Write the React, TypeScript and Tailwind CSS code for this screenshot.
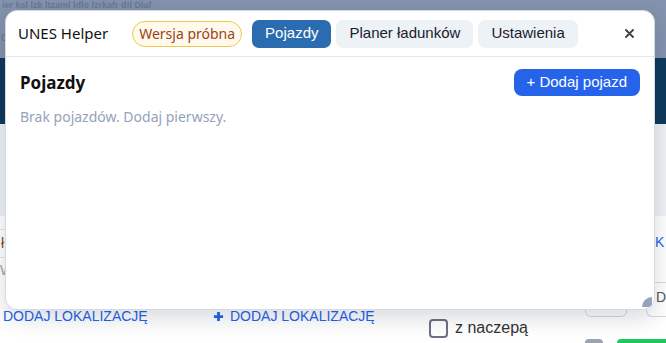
import React from 'react';

const tabs = [
  { label: 'Pojazdy', active: true },
  { label: 'Planer ładunków', active: false },
  { label: 'Ustawienia', active: false },
];

const PlusIcon = () => (
  <svg width="11" height="11" viewBox="0 0 12 12" className="shrink-0">
    <path d="M6 1v10M1 6h10" stroke="#2563eb" strokeWidth="3" />
  </svg>
);

const BackgroundPage: React.FC = () => (
  <div className="flex flex-col h-full font-['Liberation_Sans',sans-serif]">
    {/* dimmed top bar */}
    <div className="h-[58px] bg-[#8393ad] overflow-hidden">
      <div className="pl-[2px] pt-[1px] text-[9px] font-bold leading-[9px] text-[#5d6d8a] whitespace-nowrap opacity-70">
        ier ksl lzk ltzaml ldlo lzrkafr d!l Dlaf
      </div>
      <div className="pl-[1px] mt-[20px] text-[12px] leading-[14px] text-[#5d6d8a] opacity-70">c:</div>
    </div>
    <div className="h-[67px] bg-[#0e3a5c]" />
    <div className="h-[92px] bg-[#eef1f4]" />
    <div className="flex flex-col flex-1 bg-white">
      <div className="h-[66px] flex">
        <div className="w-[20px] flex flex-col">
          <div className="h-[13px]" />
          <div className="border-t border-[#e2e6ea] h-[28px] flex items-center text-[14px] text-[#7a4a2a] pl-[1px]">ł</div>
          <div className="border-t border-[#e2e6ea] h-[25px] flex items-center text-[14px] text-[#a0a6ad]">W</div>
        </div>
        <div className="flex-1" />
        <div className="w-[11px] pt-[18px] text-[14px] leading-[16px] text-[#2563eb]">K</div>
      </div>
      <div className="flex-1 flex items-start">
        <div className="w-[213px] pl-[3px] pt-[26px] text-[14px] leading-[16px] text-[#2563eb] whitespace-nowrap">
          DODAJ LOKALIZACJĘ
        </div>
        <div className="w-[216px] pt-[26px] flex items-center gap-[6px] text-[14px] leading-[16px] text-[#2563eb] whitespace-nowrap">
          <PlusIcon />
          DODAJ LOKALIZACJĘ
        </div>
        <div className="w-[156px] pt-[36px] flex items-center gap-[7px]">
          <div className="w-[19px] h-[19px] rounded-[4px] border-2 border-[#6b7280] bg-white" />
          <span className="text-[16px] leading-[20px] text-[#333]">z naczepą</span>
        </div>
        <div className="w-[81px] flex flex-col">
          <div className="flex h-[35px]">
            <div className="w-[46px] rounded-b-[6px] border border-[#d3d9e1]" />
            <div className="ml-[19px] flex-1 rounded-l-[6px] border-y border-l border-[#d3d9e1] pl-[9px] pt-[6px] text-[14px] leading-[16px] text-[#555]">
              D
            </div>
          </div>
          <div className="mt-[22px] flex">
            <div className="w-[18px] h-[4px] rounded-t-[4px] bg-[#9ca3af]" />
            <div className="ml-[14px] flex-1 h-[4px] rounded-tl-[6px] bg-[#22c55e]" />
          </div>
        </div>
      </div>
    </div>
  </div>
);

export default function App() {
  return (
    <div className="relative w-[666px] h-[343px] overflow-hidden bg-white font-['Noto_Sans',sans-serif]">
      <BackgroundPage />

      {/* modal */}
      <div className="absolute left-[5px] top-[10px] w-[650px] h-[300px] rounded-[12px] border border-[#d5dbe3] bg-white shadow-[0_8px_22px_rgba(15,23,42,0.16)] flex flex-col overflow-hidden">
        <div className="flex items-center h-[46px] shrink-0 border-b border-[#e2e8f0] pl-[12px] pr-[20px]">
          <span className="text-[15px] text-[#111]">UNES Helper</span>
          <span className="ml-[24px] h-[26px] px-[6px] flex items-center rounded-full border border-[#ecc94b] bg-[#fffaeb] text-[14px] text-[#9c4221]">
            Wersja próbna
          </span>
          <div className="ml-[10px] flex gap-[5px]">
            {tabs.map((t) => (
              <button
                key={t.label}
                className={`h-[28px] px-[13px] rounded-[7px] text-[15px] font-['Liberation_Sans',sans-serif] ${
                  t.active ? 'bg-[#2b6cb0] text-white' : 'bg-[#edf2f7] text-[#1a202c]'
                }`}
              >
                {t.label}
              </button>
            ))}
          </div>
          <button className="ml-auto w-[10px] h-[10px] flex items-center justify-center">
            <svg width="9" height="9" viewBox="0 0 9 9">
              <path d="M1 1l7 7M8 1L1 8" stroke="#3f3f46" strokeWidth="1.8" strokeLinecap="round" />
            </svg>
          </button>
        </div>

        <div className="flex-1 pl-[14px] pr-[14px] pt-[12px]">
          <div className="flex items-center justify-between">
            <h2 className="text-[17px] font-bold text-[#111]">Pojazdy</h2>
            <button className="h-[27px] px-[13px] rounded-[8px] bg-[#2563eb] text-white text-[15px] font-['Liberation_Sans',sans-serif]">
              + Dodaj pojazd
            </button>
          </div>
          <p className="mt-[11px] text-[14px] leading-[20px] text-[#94a3b8]">Brak pojazdów. Dodaj pierwszy.</p>
        </div>

        {/* resize handle */}
        <svg className="absolute right-[2px] bottom-[2px]" width="10" height="10" viewBox="0 0 10 10">
          <path d="M10 0A10 10 0 0 0 0 10H10Z" fill="#94a3b8" />
        </svg>
      </div>
    </div>
  );
}
